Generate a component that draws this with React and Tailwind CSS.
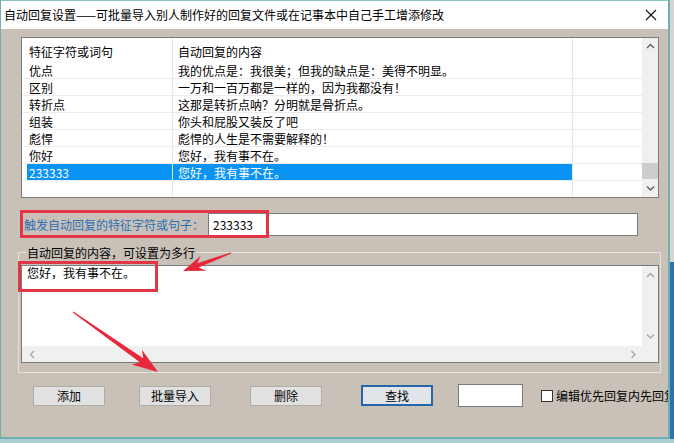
import React from 'react'

const rows = [
  ['优点', '我的优点是：我很美；但我的缺点是：美得不明显。'],
  ['区别', '一万和一百万都是一样的，因为我都没有！'],
  ['转折点', '这那是转折点呐？分明就是骨折点。'],
  ['组装', '你头和屁股又装反了吧'],
  ['彪悍', '彪悍的人生是不需要解释的！'],
  ['你好', '您好，我有事不在。'],
]

function Chevron({ dir = 'up', color = '#606060' }) {
  const pts = {
    up: '1,5 4.5,1.5 8,5',
    down: '1,1.5 4.5,5 8,1.5',
    left: '5,1 1.5,4.5 5,8',
    right: '1.5,1 5,4.5 1.5,8',
  }[dir]
  const vertical = dir === 'up' || dir === 'down'
  return (
    <svg width={vertical ? 9 : 7} height={vertical ? 7 : 9} viewBox={vertical ? '0 0 9 7' : '0 0 7 9'}>
      <polyline points={pts} fill="none" stroke={color} strokeWidth="1.4" />
    </svg>
  )
}

function arrowPoints(x1, y1, x2, y2, head, hw, sw) {
  const dx = x2 - x1
  const dy = y2 - y1
  const L = Math.hypot(dx, dy)
  const ux = dx / L
  const uy = dy / L
  const px = -uy
  const py = ux
  const bx = x2 - ux * head
  const by = y2 - uy * head
  const p = [
    [x1 + px * 0.6, y1 + py * 0.6],
    [bx + ux * 4 + px * sw, by + uy * 4 + py * sw],
    [bx - ux * 2 + px * hw, by - uy * 2 + py * hw],
    [x2, y2],
    [bx - ux * 2 - px * hw, by - uy * 2 - py * hw],
    [bx + ux * 4 - px * sw, by + uy * 4 - py * sw],
    [x1 - px * 0.6, y1 - py * 0.6],
  ]
  return p.map(([a, b]) => `${a.toFixed(1)},${b.toFixed(1)}`).join(' ')
}

function Button({ children, focused }) {
  return (
    <div
      className={
        focused
          ? 'flex h-[21px] w-[72px] shrink-0 items-center justify-center border-2 border-[#2468a8] bg-[#e1e5ea]'
          : 'flex h-[20px] w-[72px] shrink-0 items-center justify-center border border-[#adadad] bg-[#e1e1e1]'
      }
    >
      <span className="leading-[14px]">{children}</span>
    </div>
  )
}

export default function App() {
  return (
    <div className="relative flex h-[443px] w-[674px] flex-col overflow-hidden bg-[#a9cfcf] font-['Noto_Sans_CJK_SC',sans-serif] text-[12px] text-black">
      <div className="flex h-[439px]">
        {/* dialog window */}
        <div className="flex w-[668px] shrink-0 flex-col border-b-2 border-l border-[#6fb0b2] bg-[#c9c1b8]">
          <div className="flex h-[29px] items-center justify-between border-t border-[#8cc4c4] bg-white pl-[3px] pr-[11px]">
            <span className="whitespace-nowrap leading-[14px]">
              自动回复设置——可批量导入别人制作好的回复文件或在记事本中自己手工增添修改
            </span>
            <svg width="12" height="12" viewBox="0 0 12 12">
              <path d="M1 1 L11 11 M11 1 L1 11" stroke="#111" strokeWidth="1.1" />
            </svg>
          </div>

          <div className="flex flex-col pl-[20px] pt-[8px]">
            {/* list view */}
            <div className="flex h-[161px] w-[638px] border border-[#7d7d7d] bg-white">
              <div className="flex flex-1 flex-col">
                <div className="flex h-[24px]">
                  <div className="w-[151px] border-r border-[#e6e6e6] pl-[7px] pt-[6px] leading-[15px]">特征字符或词句</div>
                  <div className="w-[400px] border-r border-[#e6e6e6] pl-[5px] pt-[6px] leading-[15px]">自动回复的内容</div>
                  <div className="flex-1" />
                </div>
                {rows.map(([k, v]) => (
                  <div key={k} className="flex h-[17px] border-b border-[#ececec]">
                    <div className="w-[151px] whitespace-nowrap border-r border-[#e6e6e6] pl-[7px] pt-[1px] leading-[15px]">{k}</div>
                    <div className="w-[400px] whitespace-nowrap border-r border-[#e6e6e6] pl-[5px] pt-[1px] leading-[15px]">{v}</div>
                    <div className="flex-1" />
                  </div>
                ))}
                <div className="flex h-[17px] border-b border-[#ececec]">
                  <div className="w-[151px] border-r border-[#e6e6e6] pl-[5px]">
                    <div className="h-full bg-[#0a93f2] pl-[2px] pt-[1px] leading-[15px] text-white">233333</div>
                  </div>
                  <div className="w-[400px] border-r border-[#e6e6e6] bg-[#0a93f2] pl-[5px] pt-[1px] leading-[15px] text-white">
                    您好，我有事不在。
                  </div>
                  <div className="flex-1" />
                </div>
                <div className="flex flex-1">
                  <div className="w-[151px] border-r border-[#e6e6e6]" />
                  <div className="w-[400px] border-r border-[#e6e6e6]" />
                </div>
              </div>
              <div className="flex w-[16px] flex-col bg-[#f0f0f0]">
                <div className="flex h-[17px] items-center justify-center">
                  <Chevron dir="up" />
                </div>
                <div className="flex flex-1 flex-col justify-end">
                  <div className="h-[16px] bg-[#cdcdcd]" />
                </div>
                <div className="flex h-[18px] items-center justify-center">
                  <Chevron dir="down" />
                </div>
              </div>
            </div>

            {/* trigger text */}
            <div className="mt-[15px] flex h-[23px] items-center">
              <span className="ml-[3px] w-[184px] shrink-0 whitespace-nowrap leading-[14px] text-[#2a70b4]">触发自动回复的特征字符或句子：</span>
              <div className="flex h-[23px] w-[430px] shrink-0 items-center border border-[#7a7a7a] bg-white pl-[4px]">
                <span className="leading-[14px]">233333</span>
              </div>
            </div>

            {/* group box */}
            <div className="relative -ml-[3px] mt-[16px] w-[643px] border border-[#e6e1da] pb-[9px] pl-[2px] pr-[1px] pt-[12px]">
              <span className="absolute left-[7px] top-[-8px] bg-[#c9c1b8] px-[1px] leading-[16px]">自动回复的内容，可设置为多行</span>
              <div className="flex h-[98px] w-[638px] flex-col border border-[#7a7a7a] bg-white">
                <div className="flex flex-1">
                  <div className="flex-1 pl-[5px] leading-[14px]">您好，我有事不在。</div>
                  <div className="flex w-[16px] flex-col justify-between bg-[#f0f0f0] py-[6px]">
                    <div className="flex justify-center">
                      <Chevron dir="up" color="#a8a8a8" />
                    </div>
                    <div className="flex justify-center">
                      <Chevron dir="down" color="#a8a8a8" />
                    </div>
                  </div>
                </div>
                <div className="flex h-[16px] items-center justify-between bg-[#f0f0f0] pl-[7px] pr-[21px]">
                  <Chevron dir="left" color="#a8a8a8" />
                  <Chevron dir="right" color="#a8a8a8" />
                </div>
              </div>
            </div>

            {/* buttons */}
            <div className="mt-[11px] flex h-[23px] items-center">
              <div className="ml-[12px] shrink-0">
                <Button>添加</Button>
              </div>
              <div className="ml-[34px] shrink-0">
                <Button>批量导入</Button>
              </div>
              <div className="ml-[39px] shrink-0">
                <Button>删除</Button>
              </div>
              <div className="ml-[39px] shrink-0">
                <Button focused>查找</Button>
              </div>
              <div className="ml-[25px] h-[23px] w-[65px] shrink-0 border border-[#7a7a7a] bg-white" />
              <div className="ml-[18px] h-[12px] w-[12px] shrink-0 border border-[#333] bg-white" />
              <span className="ml-[3px] shrink-0 whitespace-nowrap leading-[14px]">编辑优先回复内先回复</span>
            </div>
          </div>
        </div>

        {/* what lies behind, right of the dialog */}
        <div className="flex flex-1 flex-col border-l-2 border-[#6fb0b2]">
          <div className="h-[262px] bg-[#d8d4cf]" />
          <div className="flex-1 bg-[#2c74ad]" />
        </div>
      </div>
      <div className="flex-1 bg-[#a9cfcf]" />

      {/* red annotations drawn over the dialog */}
      <div className="pointer-events-none absolute left-[20px] top-[210px] h-[28px] w-[249px] border-[3px] border-[#e23644]" />
      <div className="pointer-events-none absolute left-[18px] top-[261px] h-[31px] w-[140px] border-[3px] border-[#e23644]" />
      <svg className="pointer-events-none absolute left-0 top-0" width="674" height="443">
        <polygon points={arrowPoints(231, 253, 183, 271, 20, 8, 2.2)} fill="#e8283a" />
        <polygon points={arrowPoints(73, 312, 158, 372, 24, 9, 2.6)} fill="#e8283a" />
      </svg>
    </div>
  )
}
